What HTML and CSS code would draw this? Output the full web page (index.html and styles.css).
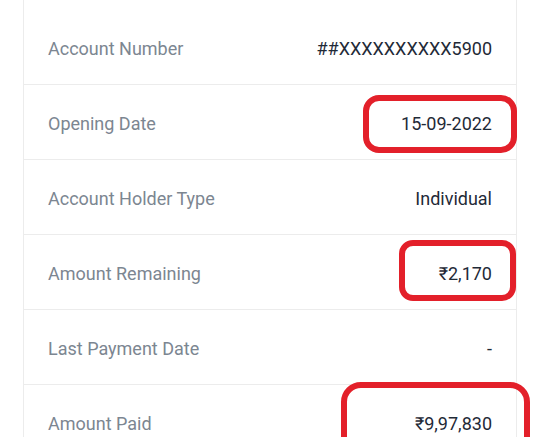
FILE: index.html
```html
<!DOCTYPE html>
<html>
<head>
<meta charset="utf-8">
<link rel="stylesheet" href="styles.css">
</head>
<body>
<div class="page">
  <div class="card">
    <div class="row"><span class="label">Account Number</span><span class="value">##XXXXXXXXXX5900</span></div>
    <div class="row"><span class="label">Opening Date</span><span class="value">15-09-2022</span></div>
    <div class="row"><span class="label">Account Holder Type</span><span class="value">Individual</span></div>
    <div class="row"><span class="label">Amount Remaining</span><span class="value">₹2,170</span></div>
    <div class="row"><span class="label">Last Payment Date</span><span class="value">-</span></div>
    <div class="row"><span class="label">Amount Paid</span><span class="value">₹9,97,830</span></div>
  </div>
  <div class="mark mark-1"></div>
  <div class="mark mark-2"></div>
  <div class="mark mark-3"></div>
</div>
</body>
</html>
```

FILE: styles.css
```css
html, body {
  margin: 0;
  padding: 0;
  background: #ffffff;
  overflow: hidden;
}
.page {
  position: relative;
  width: 540px;
  height: 437px;
  overflow: hidden;
  font-family: Roboto, "Liberation Sans", sans-serif;
}
.card {
  margin: 0 23px 0 23px;
  padding-top: 10px;
  border-left: 1px solid #ececec;
  border-right: 1px solid #ececec;
}
.row {
  height: 75px;
  border-bottom: 1px solid #ececec;
  display: flex;
  align-items: center;
  justify-content: space-between;
  padding: 2px 24px 0 24px;
  box-sizing: border-box;
}
.row:last-child { border-bottom: none; }
.label {
  font-size: 18px;
  color: #7c8691;
}
.value {
  font-size: 18px;
  color: #1f2a37;
}
.mark {
  position: absolute;
  border: 6px solid #e3202a;
  border-radius: 16px;
  box-sizing: border-box;
}
.mark-1 { left: 363px; top: 95px; width: 154px; height: 58px; }
.mark-2 { left: 399px; top: 240px; width: 117px; height: 61px; border-radius: 14px; }
.mark-3 { left: 341px; top: 382px; width: 189px; height: 80px; border-radius: 20px; }
```
